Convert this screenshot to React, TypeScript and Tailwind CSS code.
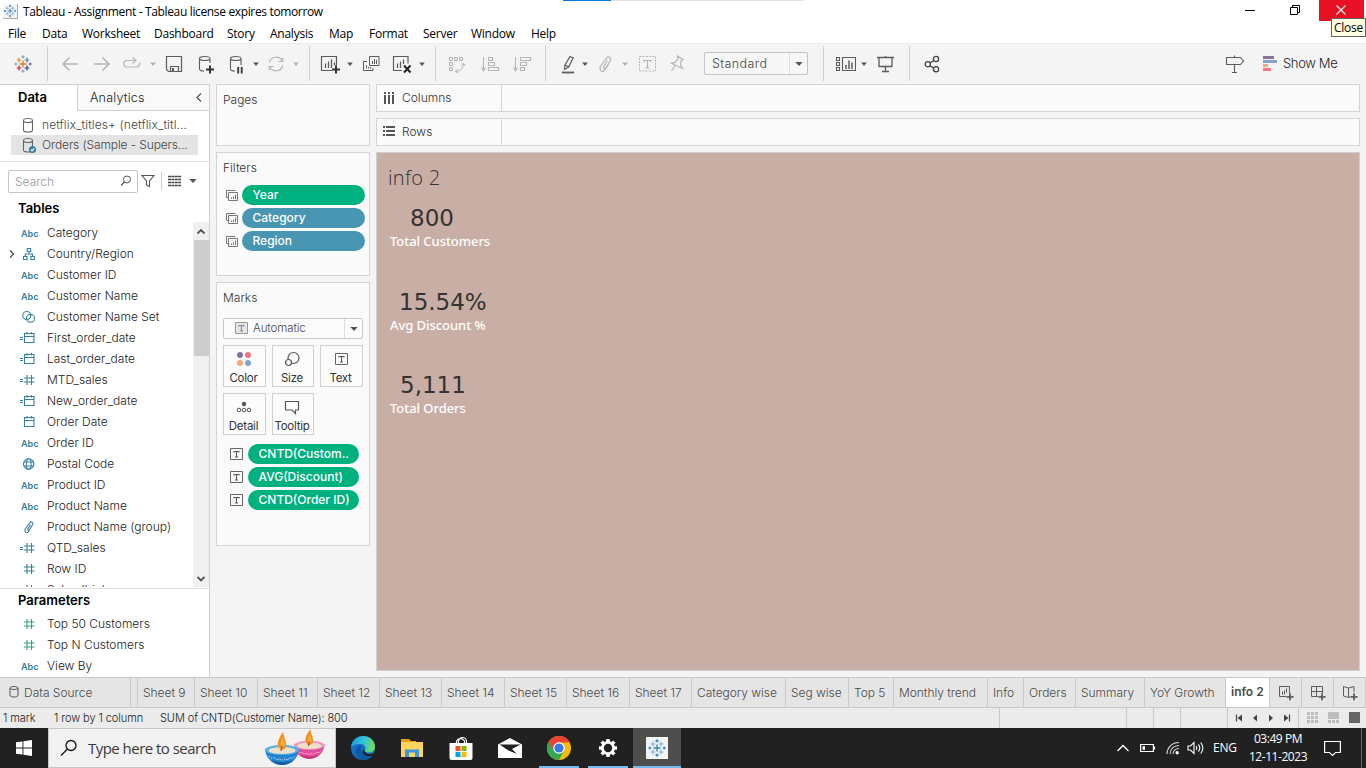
import React from "react";

type Kids = { children?: React.ReactNode; className?: string };

const UI = "font-['Open_Sans',sans-serif] font-normal";

function Svg({ w = 20, h = 20, className = "", children }: Kids & { w?: number; h?: number }) {
  return (
    <svg width={w} height={h} viewBox={`0 0 ${w} ${h}`} fill="none" className={`shrink-0 ${className}`}>
      {children}
    </svg>
  );
}

const plus = (x: number, y: number, r: number) => `M${x - r} ${y}h${2 * r}M${x} ${y - r}v${2 * r}`;

function TableauMark({ size, mono, className = "" }: { size: number; mono?: boolean; className?: string }) {
  const c = (a: string, b: string) => (mono ? b : a);
  return (
    <svg width={size} height={size} viewBox="0 0 20 20" fill="none" strokeWidth="1.2" className={`shrink-0 ${className}`}>
      <path d={plus(10, 10, 3.4)} stroke={c("#e8762c", "#2f7fae")} strokeWidth="1.3" />
      <path d={plus(6, 6, 2.4)} stroke={c("#eb912c", "#7fb4d3")} />
      <path d={plus(14, 6, 2.4)} stroke={c("#59879b", "#7fb4d3")} />
      <path d={plus(6, 14, 2.4)} stroke={c("#c72037", "#7fb4d3")} />
      <path d={plus(14, 14, 2.4)} stroke={c("#1f447e", "#7fb4d3")} />
      <path d={plus(10, 2.8, 1.6)} stroke={c("#7ba7bd", "#2f7fae")} />
      <path d={plus(10, 17.2, 1.6)} stroke={c("#9b9bc4", "#2f7fae")} />
      <path d={plus(2.8, 10, 1.6)} stroke={c("#7ba7bd", "#2f7fae")} />
      <path d={plus(17.2, 10, 1.6)} stroke={c("#5c6692", "#2f7fae")} />
    </svg>
  );
}

const Sep = ({ className = "" }: Kids) => <div className={`h-[35px] w-px shrink-0 bg-[#cfcfcf] ${className}`} />;

const Caret = ({ className = "", light }: Kids & { light?: boolean }) => (
  <Svg w={8} h={20} className={className}>
    <path d="M1.2 8.500h5.600L4 12z" fill={light ? "#b0b0b0" : "#555"} />
  </Svg>
);

const BigCaret = () => (
  <Svg w={8} h={6}>
    <path d="M.3 1h7.400L4 5z" fill="#555" />
  </Svg>
);

const G = "#5c5c5c";
const L = "#b5b5b5";

const menus: [string, string][] = [
  ["File", "w-[34px]"],
  ["Data", "w-[40px]"],
  ["Worksheet", "w-[72px]"],
  ["Dashboard", "w-[73px]"],
  ["Story", "w-[43px]"],
  ["Analysis", "w-[59px]"],
  ["Map", "w-[40px]"],
  ["Format", "w-[54px]"],
  ["Server", "w-[48px]"],
  ["Window", "w-[60px]"],
  ["Help", "w-[40px]"],
];

function TitleBar() {
  return (
    <div className={`relative flex h-6 shrink-0 ${UI} text-[12px] text-black`}>
      <div className="absolute left-[563px] top-0 flex h-px w-[241px] bg-[#e3e3e3]">
        <div className="w-12 bg-[#0078d7]" />
      </div>
      <div className="flex items-center pl-[3px]">
        <div className="mb-0.5 flex size-[15px] items-center justify-center border-b border-r border-[#aaa] bg-[#f6f6f6]">
          <TableauMark size={14} mono />
        </div>
        <span className="ml-[5px] tracking-[-0.35px]">Tableau - Assignment - Tableau license expires tomorrow</span>
      </div>
      <div className="ml-auto flex">
        <Svg w={45} h={21}>
          <path d="M16 10.500h10" stroke="#000" />
        </Svg>
        <Svg w={45} h={21}>
          <path d="M16.500 7.500h7v7h-7zM18.500 7V5.500h7v7H24" stroke="#000" />
        </Svg>
        <div className="h-[21px] w-[45px] bg-[#e81123]">
          <Svg w={45} h={21}>
            <path d="M17.500 5.500l9 9M26.500 5.500l-9 9" stroke="#fff" strokeWidth="1.100" />
          </Svg>
        </div>
        <div className="w-0.5" />
      </div>
      <div className="absolute right-0 top-[18px] z-10 flex h-[19px] w-[35px] items-center justify-center border border-[#646464] bg-[#ffffe1] text-[12px] tracking-[-0.3px]">
        Close
      </div>
    </div>
  );
}

function MenuBar() {
  return (
    <div className={`flex h-[19px] shrink-0 items-center pl-2 ${UI} text-[12px] tracking-[-0.25px] text-black`}>
      {menus.map(([m, w]) => (
        <div key={m} className={`${w} shrink-0`}>
          {m}
        </div>
      ))}
    </div>
  );
}

function Toolbar() {
  return (
    <div className="flex h-[41px] shrink-0 items-center border-t border-[#ececec] bg-[#f4f4f4] pb-px pl-[13px] pr-[29px]">
      <TableauMark size={20} />
      <Sep className="ml-[14px]" />
      <Svg className="ml-3">
        <path d="M3 10h15M9.500 3.500L3 10l6.500 6.500" stroke={L} strokeWidth="1.600" />
      </Svg>
      <Svg className="ml-3">
        <path d="M2 10h15M10.500 3.500L17 10l-6.500 6.500" stroke={L} strokeWidth="1.600" />
      </Svg>
      <Svg className="ml-[10px]">
        <path d="M13 6.500H5a3.200 3.200 0 000 6.500h9.500a3.200 3.200 0 003-4.500M10.500 3.500L14 6.500l-3.500 3" stroke={L} strokeWidth="1.200" />
      </Svg>
      <Caret light className="ml-[7px]" />
      <Svg className="ml-[7px]">
        <path d="M2.500 2.500h15v15h-13l-2-2zM6.500 17v-4.500h8V17" stroke={G} strokeWidth="1.200" />
        <path d="M8 14h2v3H8z" fill={G} />
      </Svg>
      <Svg className="ml-3">
        <path d="M14 9V4.500M3.500 4.500v10.500c0 1.200 2 2 4.500 2M3.500 4.500C3.500 3.200 5.800 2.500 8.700 2.500s5.300.7 5.300 2-2.400 2-5.300 2-5.200-.7-5.200-2z" stroke={G} strokeWidth="1.100" />
        <path d="M10 15.500h8M14 11.500v8" stroke="#333" strokeWidth="2" />
      </Svg>
      <Svg className="ml-[11px]">
        <path d="M14 11V4.500M3.500 4.500v10.500c0 1.200 2 2 4.500 2M3.500 4.500C3.500 3.200 5.800 2.500 8.700 2.500s5.300.7 5.300 2-2.400 2-5.300 2-5.200-.7-5.200-2z" stroke={G} strokeWidth="1.100" />
        <path d="M11.200 13v6.500M14.700 13v6.500" stroke="#333" strokeWidth="1.800" />
      </Svg>
      <Caret className="ml-[5px]" />
      <Svg className="ml-[6px]">
        <path d="M3.200 8.500a7 7 0 0113-1.500M16.800 11.500a7 7 0 01-13 1.500M12.500 7.500h4.200V3.500M7.500 12.500H3.300v4" stroke={L} strokeWidth="1.200" />
      </Svg>
      <Caret light className="ml-[6px]" />
      <Sep className="ml-[9px]" />
      <Svg className="ml-[10px]">
        <path d="M12 16.500H1.500v-14h15v9" stroke={G} strokeWidth="1.200" />
        <path d="M5.500 9.500V14M8.500 7.500V14M11.500 5.500V14M14.500 8.500v3" stroke={G} strokeWidth="1.300" />
        <path d="M12 15.500h8M16 11.500v8" stroke="#333" strokeWidth="2" />
      </Svg>
      <Caret className="ml-[6px]" />
      <Svg className="ml-[7px]">
        <path d="M8.500 2.500h9.500v9H8.500zM6 7.500H2.500v9H12V14" stroke={G} />
        <path d="M11.500 7v3M13.500 5v5M15.500 6v4M5.500 11v3.500M7.500 13v1.500M9.500 13v1.500" stroke={G} />
      </Svg>
      <Svg className="ml-[11px]">
        <path d="M10 16.500H1.500v-14h14.500v7" stroke={G} strokeWidth="1.200" />
        <path d="M5.500 9.500V14M8.500 7.500V14M11.500 5.500V10" stroke={G} strokeWidth="1.300" />
        <path d="M12 11.500l6.500 7M18.500 11.500l-6.500 7" stroke="#222" strokeWidth="2" />
      </Svg>
      <Caret className="ml-[6px]" />
      <Sep className="ml-[9px]" />
      <Svg className="ml-[11px]">
        <path d="M2.500 3.500h3v3h-3zM7.500 3.500h3v3h-3zM12.500 3.500h3v3h-3zM2.500 8.500h3v3h-3zM2.500 13.500h3v3h-3zM16.500 10c0 4-3 7-7.500 7.500M14 12l2.500-3 2 3M11 15l-3 2.500 3 1.500" stroke={L} />
      </Svg>
      <Svg className="ml-[13px]">
        <path d="M3.500 3v13M1.500 13.500L3.500 17l2-3.500M8.500 3.500h4v3h-4zM8.500 8.500h6v3h-6zM8.500 13.500h10v3h-10z" stroke={L} strokeWidth="1.100" />
      </Svg>
      <Svg className="ml-3">
        <path d="M3.500 3v13M1.500 13.500L3.500 17l2-3.500M8.500 3.500h10v3h-10zM8.500 8.500h6v3h-6zM8.500 13.500h4v3h-4z" stroke={L} strokeWidth="1.100" />
      </Svg>
      <Sep className="ml-[13px]" />
      <Svg className="ml-3">
        <path d="M12 2.500l3.200 1.300-4.700 9.500-4 2 .5-4.300zM7.200 11l3.300 1.800" stroke={G} strokeWidth="1.200" />
        <path d="M4 18.500h12" stroke={G} strokeWidth="1.800" />
      </Svg>
      <Caret className="ml-[3px]" />
      <Svg className="ml-[6px]">
        <path d="M12.500 6.500l-3.700 6.500c-.7 1.500 1.200 2.400 2 1L15.300 7c1.500-3.500-2-5.500-4-2.700L5.500 12.500c-1.800 4 1.800 6 4 3.800l4-6M5.500 12.500L11.300 4.300" stroke={L} strokeWidth="1.200" />
      </Svg>
      <Caret light className="ml-[6px]" />
      <Svg className="ml-2">
        <path d="M2.500 2.500h16v14.500h-16z" stroke={L} strokeDasharray="2 1.200" />
        <path d="M7 8V6.500h7V8M10.500 6.500v7.500M8.500 14h4" stroke={L} strokeWidth="1.200" />
      </Svg>
      <Svg className="ml-[10px]">
        <path d="M10.500 2l5.500 3.500-1.800.9-.7 4.600 2 3.200-3.500-1.200L4.500 9.200l3.300-.8 3-3.200zM8.300 11.500l-4 5.500" stroke={L} strokeWidth="1.200" />
      </Svg>
      <div className="ml-[17px] flex h-[23px] w-[104px] shrink-0 items-center rounded-[2px] border border-[#c4c4c4] bg-[#f7f7f7] pl-[7px] text-[12.5px] tracking-[0.4px] text-[#444]">
        <span className="pt-px">Standard</span>
        <div className="ml-auto flex h-full w-[18px] items-center justify-center border-l border-[#ddd]">
          <BigCaret />
        </div>
      </div>
      <Sep className="ml-[15px]" />
      <Svg className="ml-3">
        <path d="M.5 3.500h3v3h-3zM.5 8.500h3v3h-3zM.5 13.500h3v3h-3zM6.500 3.500h13v13h-13z" stroke={G} strokeWidth="1.100" />
        <path d="M10 11v4M13 6.500V15M16 8.500V15" stroke={G} strokeWidth="1.500" />
      </Svg>
      <Caret className="ml-1" />
      <Svg className="ml-2">
        <path d="M1 3.500h17M3 4v8.500h13V4M9.500 12.500v5M6 17.500h7M9.500 2v1" stroke={G} strokeWidth="1.300" />
      </Svg>
      <Sep className="ml-[13px]" />
      <Svg className="ml-3">
        <g stroke="#444" strokeWidth="1.300">
          <circle cx="5.800" cy="10.300" r="2.600" />
          <circle cx="14" cy="5" r="2.600" />
          <circle cx="14" cy="15.300" r="2.600" />
          <path d="M8 9l3.800-2.500M8 11.800l3.800 2.300" />
        </g>
      </Svg>
      <Svg className="ml-auto">
        <path d="M1.500 3.500h14L18.500 7l-3 3.500h-14zM9.500 1.500v2M9.500 10.500v7.500M7 18.500h5" stroke={G} strokeWidth="1.100" />
      </Svg>
      <Svg w={14} h={20} className="ml-[18px]">
        <path d="M0 3.500h11" stroke="#8a7399" strokeWidth="3" />
        <path d="M0 7.500h14" stroke="#84a4cb" strokeWidth="3" />
        <path d="M0 11.500h5" stroke="#f5a77e" strokeWidth="3" />
        <path d="M0 15.500h8" stroke="#f8737f" strokeWidth="3" />
      </Svg>
      <span className="ml-[6px] w-[54px] whitespace-nowrap text-[13px] tracking-[-0.35px] text-[#222]">Show Me</span>
    </div>
  );
}

type Kind = "abc" | "hier" | "set" | "date" | "cdate" | "num" | "cnum" | "geo" | "group";

function FieldIcon({ kind, green }: { kind: Kind; green?: boolean }) {
  const c = green ? "#35a27f" : "#37809f";
  if (kind === "abc")
    return <span className="w-4 pt-0.5 text-center text-[9px] font-semibold leading-none text-[#37809f]">Abc</span>;
  return (
    <svg width="20" height="16" viewBox="0 0 20 16" fill="none" stroke={c} strokeWidth="1.1" className="-ml-px shrink-0">
      {(kind === "cdate" || kind === "cnum") && <path d="M0 7.500h3M0 9.500h3" />}
      {(kind === "date" || kind === "cdate") && <path d="M4.500 3.500h9.500v9H4.500zM4.500 6.500H14M7 2v2.500M11.500 2v2.500" />}
      {(kind === "num" || kind === "cnum") && <path d="M7 3v10M11.500 3v10M4 6h10.500M4 10h10.500" />}
      {kind === "hier" && <path d="M7.200 2.500h3.500v3H7.200zM3.500 10.500h3.500v3H3.500zM10.800 10.500h3.500v3h-3.500zM9 5.500V8M5.300 10.500V8h7.300v2.500" />}
      {kind === "set" && (
        <>
          <circle cx="6.800" cy="6.500" r="4" />
          <circle cx="10.500" cy="9.300" r="4" />
        </>
      )}
      {kind === "geo" && (
        <>
          <circle cx="8.700" cy="8" r="5.200" />
          <ellipse cx="8.700" cy="8" rx="2.400" ry="5.200" />
          <path d="M4 6h9.400M4 10h9.400" />
        </>
      )}
      {kind === "group" && <path d="M10.500 5.500L7.800 10c-.5 1.300 1 2 1.600.8l3.200-5c1.300-2.400-1.500-4-3-1.800L5.200 10c-1.400 3 1.300 4.300 3 2.800l3.500-5.500" />}
    </svg>
  );
}

function Field({ kind, label, green, expand }: { kind: Kind; label: string; green?: boolean; expand?: boolean }) {
  return (
    <div className="flex h-[21px] shrink-0 items-center text-[12px] text-[#222]">
      <div className="w-[21px] pl-2">
        {expand && (
          <svg width="8" height="10" viewBox="0 0 8 10" fill="none">
            <path d="M2 1.500L5.500 5 2 8.500" stroke="#555" strokeWidth="1.400" />
          </svg>
        )}
      </div>
      <div className="flex w-[26px] items-center">
        <FieldIcon kind={kind} green={green} />
      </div>
      <span className="whitespace-nowrap">{label}</span>
    </div>
  );
}

const fields: [Kind, string][] = [
  ["abc", "Category"],
  ["hier", "Country/Region"],
  ["abc", "Customer ID"],
  ["abc", "Customer Name"],
  ["set", "Customer Name Set"],
  ["cdate", "First_order_date"],
  ["cdate", "Last_order_date"],
  ["cnum", "MTD_sales"],
  ["cdate", "New_order_date"],
  ["date", "Order Date"],
  ["abc", "Order ID"],
  ["geo", "Postal Code"],
  ["abc", "Product ID"],
  ["abc", "Product Name"],
  ["group", "Product Name (group)"],
  ["cnum", "QTD_sales"],
  ["num", "Row ID"],
  ["num", "Sales (bin)"],
];

const Cylinder = ({ check }: { check?: boolean }) => (
  <Svg w={16} h={18}>
    <path d="M1.500 4.500v9.500c0 1.200 2 2 4.500 2s4.500-.8 4.500-2V4.500M1.500 4.500c0-1.200 2-2 4.500-2s4.500.8 4.500 2-2 2-4.500 2-4.500-.8-4.500-2z" stroke="#666" strokeWidth="1.100" />
    {check && (
      <>
        <circle cx="10.500" cy="13.500" r="3.600" fill="#37809f" />
        <path d="M8.700 13.500l1.300 1.400 2.300-2.600" stroke="#fff" strokeWidth="1.100" />
      </>
    )}
  </Svg>
);

function DataPane() {
  return (
    <div className="flex w-[210px] shrink-0 flex-col border-r border-[#d0d0d0] bg-white">
      <div className="flex h-[27px] shrink-0 border-t border-[#d0d0d0]">
        <div className="flex w-[77px] items-center pl-[18px] text-[13px] font-semibold text-black">Data</div>
        <div className="flex flex-1 items-center border-b border-l border-[#d0d0d0] bg-[#f9f9f9] pl-3 text-[12.5px] tracking-[0.2px] text-[#222]">
          <span className="pt-px">Analytics</span>
          <Svg w={8} h={14} className="ml-auto mr-[6px]">
            <path d="M6 2.500L2 6.500l4 4" stroke="#555" strokeWidth="1.300" />
          </Svg>
        </div>
      </div>
      <div className="flex h-[50px] shrink-0 flex-col pl-[11px] pt-1 text-[12px] text-[#444]">
        <div className="flex h-5 w-[187px] items-center gap-[4px] pl-[11px]">
          <Cylinder />
          <span className="whitespace-nowrap tracking-[0.1px]">netflix_titles+ (netflix_titl...</span>
        </div>
        <div className="flex h-5 w-[187px] items-center gap-[4px] bg-[#e4e4e4] pl-[11px]">
          <Cylinder check />
          <span className="whitespace-nowrap tracking-[-0.12px]">Orders (Sample - Supers...</span>
        </div>
      </div>
      <div className="flex h-[39px] shrink-0 items-center border-t border-[#e0e0e0] pl-2">
        <div className="flex h-[23px] w-[130px] items-center rounded-[2px] border border-[#c4c4c4] pl-[6px] text-[12px] text-[#999]">
          <span className="pt-px">Search</span>
          <Svg w={12} h={12} className="ml-auto mr-[5px]">
            <circle cx="7" cy="4.500" r="3.500" stroke="#555" />
            <path d="M4.500 7L1 10.500" stroke="#555" strokeWidth="1.200" />
          </Svg>
        </div>
        <Svg w={14} h={16} className="ml-[3px]">
          <path d="M1 2.500h12L8.500 8v5.500L5.500 12V8z" stroke="#555" strokeWidth="1.100" />
        </Svg>
        <div className="ml-[6px] h-[18px] w-px bg-[#d0d0d0]" />
        <Svg w={13} h={14} className="ml-[6px]">
          <path d="M0 2.500h13M0 5.500h13M0 8.500h13M0 11.500h13" stroke="#444" strokeWidth="1.300" strokeDasharray="3 .4" />
        </Svg>
        <Svg w={8} h={6} className="ml-[8px]">
          <path d="M.3 1h7.400L4 5z" fill="#555" />
        </Svg>
      </div>
      <div className="flex h-[21px] shrink-0 items-start pl-[18px] text-[13px] font-semibold leading-[17px] text-black">Tables</div>
      <div className="flex h-[366px] shrink-0">
        <div className="flex flex-1 flex-col overflow-hidden pt-px">
          {fields.map(([k, l]) => (
            <Field key={l} kind={k} label={l} expand={k === "hier"} />
          ))}
        </div>
        <div className="mt-px flex w-4 shrink-0 flex-col items-center bg-[#f0f0f0]">
          <Svg w={16} h={18}>
            <path d="M4.500 11.500L8 8l3.500 3.500" stroke="#555" strokeWidth="1.800" />
          </Svg>
          <div className="h-[116px] w-[15px] bg-[#cdcdcd]" />
          <Svg w={16} h={17} className="mt-auto">
            <path d="M4.500 7L8 10.500 11.500 7" stroke="#555" strokeWidth="1.800" />
          </Svg>
        </div>
      </div>
      <div className="mt-px flex flex-1 flex-col border-t border-[#e0e0e0]">
        <div className="flex h-6 shrink-0 items-center pl-[18px] text-[13px] font-semibold text-black">Parameters</div>
        <Field kind="num" label="Top 50 Customers" green />
        <Field kind="num" label="Top N Customers" green />
        <Field kind="abc" label="View By" />
      </div>
    </div>
  );
}

const Card = ({ className = "", children }: Kids) => <div className={`shrink-0 border border-[#d4d4d4] bg-[#fafafa] ${className}`}>{children}</div>;

const TextGlyph = ({ className = "", light }: Kids & { light?: boolean }) => (
  <Svg w={14} h={14} className={className}>
    <path d="M1.500 1.500h12v11h-12z" stroke={light ? "#999" : "#666"} fill={light ? "#e6e6e6" : "none"} />
    <path d="M5 5.500V4.500h5v1M7.500 4.500v5.500M6 10h3" stroke={light ? "#888" : "#555"} strokeWidth="1.100" />
  </Svg>
);

const Pill = ({ className = "", children }: Kids) => (
  <div className={`flex h-5 items-center whitespace-nowrap rounded-full pl-[10.5px] text-[12px] font-medium text-white ${className}`}>{children}</div>
);

function FilterRow({ label, bg }: { label: string; bg: string }) {
  return (
    <div className="flex items-center pl-[9px]">
      <Svg w={12} h={12}>
        <path d="M2.500 8.500h-2v-7h9M2.500 3.500h9v8h-9z" stroke="#777" />
        <path d="M5.500 8.500V10M7.500 7.500V10M9.500 5.500V10" stroke="#777" />
      </Svg>
      <Pill className={`ml-1 w-[123px] ${bg}`}>{label}</Pill>
    </div>
  );
}

const MarkButton = ({ label, children }: Kids & { label: string }) => (
  <div className="flex h-[42px] flex-col items-center border border-[#d0d0d0] bg-[#fcfcfc] pr-[2px] pt-[5px]">
    <div className="flex h-[16px] items-center">{children}</div>
    <span className="mt-[3px] text-[11.5px] font-normal leading-[16px] tracking-[-0.25px] text-[#333]">{label}</span>
  </div>
);

function Shelves() {
  return (
    <div className="flex w-[154px] shrink-0 flex-col gap-[6px] text-[12px] text-[#333]">
      <Card className="h-[62px] px-[6px] pt-[6px]">Pages</Card>
      <Card className="h-[124px] pt-[6px]">
        <div className="px-[6px]">Filters</div>
        <div className="mt-2 flex flex-col gap-[3px]">
          <FilterRow label="Year" bg="bg-[#00b180]" />
          <FilterRow label="Category" bg="bg-[#4996b2]" />
          <FilterRow label="Region" bg="bg-[#4996b2]" />
        </div>
      </Card>
      <Card className="h-[264px] px-[6px] pt-[6px]">
        <div>Marks</div>
        <div className="mt-[11px] flex h-[21px] w-[140px] items-center rounded-[2px] border border-[#c8c8c8] bg-[#fcfcfc] pl-[10px] text-[#444]">
          <TextGlyph light className="mb-px" />
          <span className="ml-[5px] pt-px text-[11.500px] tracking-[-0.1px]">Automatic</span>
          <div className="ml-auto flex h-full w-[18px] items-center justify-center border-l border-[#ddd]">
            <BigCaret />
          </div>
        </div>
        <div className="mt-[6px] grid grid-cols-[43px_42px_43px] gap-[6px]">
          <MarkButton label="Color">
            <Svg w={16} h={16}>
              <circle cx="4" cy="4" r="3" fill="#86719a" />
              <circle cx="12" cy="4" r="3" fill="#f8737f" />
              <circle cx="4" cy="12" r="3" fill="#f5a77e" />
              <circle cx="12" cy="12" r="3" fill="#84a4cb" />
            </Svg>
          </MarkButton>
          <MarkButton label="Size">
            <Svg w={16} h={16}>
              <circle cx="9.500" cy="7" r="5.500" stroke="#555" strokeWidth="1.200" />
              <circle cx="4.500" cy="11.500" r="3" stroke="#555" strokeWidth="1.200" fill="#fcfcfc" />
            </Svg>
          </MarkButton>
          <MarkButton label="Text">
            <TextGlyph />
          </MarkButton>
          <MarkButton label="Detail">
            <Svg w={16} h={16}>
              <circle cx="8" cy="5" r="2.200" fill="#555" />
              <circle cx="3" cy="11" r="1.800" stroke="#555" />
              <circle cx="8" cy="11" r="1.800" stroke="#555" />
              <circle cx="13" cy="11" r="1.800" stroke="#555" />
            </Svg>
          </MarkButton>
          <MarkButton label="Tooltip">
            <Svg w={16} h={16}>
              <path d="M1.500 2.500h13v8.500h-3v3.500L8 11H1.500z" stroke="#555" strokeWidth="1.200" />
            </Svg>
          </MarkButton>
        </div>
        <div className="mt-[9px] flex flex-col gap-[3px]">
          {["CNTD(Custom..", "AVG(Discount)", "CNTD(Order ID)"].map((t) => (
            <div key={t} className="flex items-center pl-[6px]">
              <TextGlyph />
              <Pill className="ml-[5px] w-[111px] bg-[#00b180]">{t}</Pill>
            </div>
          ))}
        </div>
      </Card>
    </div>
  );
}

function ShelfBar({ label, children }: Kids & { label: string }) {
  return (
    <Card className="flex h-7 text-[12px] text-[#333]">
      <div className="flex w-[125px] items-center border-r border-[#d4d4d4] pl-[6px]">
        {children}
        <span className="ml-[7px]">{label}</span>
      </div>
    </Card>
  );
}

function Kpi({ value, label, pad, className = "" }: { value: string; label: string; pad: string; className?: string }) {
  return (
    <div className={`pl-[13px] ${className}`}>
      <div className={`h-[28px] font-['DejaVu_Sans',sans-serif] text-[23px] font-normal leading-[29px] text-[#333] ${pad}`}>{value}</div>
      <div className="font-['Noto_Sans',sans-serif] text-[13px] font-medium leading-[18px] tracking-[-0.05px] text-white">{label}</div>
    </div>
  );
}

function Worksheet() {
  return (
    <div className="flex w-[984px] shrink-0 flex-col gap-[6px]">
      <ShelfBar label="Columns">
        <Svg w={12} h={14}>
          <path d="M2 1v2M6 1v2M10 1v2M2 4v9M6 4v9M10 4v9" stroke="#555" strokeWidth="2" />
        </Svg>
      </ShelfBar>
      <ShelfBar label="Rows">
        <Svg w={12} h={14}>
          <path d="M0 2h2M0 6h2M0 10h2M3 2h9M3 6h9M3 10h9" stroke="#555" strokeWidth="2" />
        </Svg>
      </ShelfBar>
      <div className="h-[519px] border border-[#d0d0d0] bg-[#c9aea5]">
        <div className="pl-[11px] pt-[10px] font-['Open_Sans',sans-serif] text-[20px] font-light leading-[30px] tracking-[0.3px] text-[#333]">info 2</div>
        <Kpi value="800" label="Total Customers" pad="pl-[20px]" className="mt-[11px]" />
        <Kpi value="15.54%" label="Avg Discount %" pad="pl-[9px]" className="mt-[38px]" />
        <Kpi value="5,111" label="Total Orders" pad="pl-[10px]" className="mt-[37px]" />
      </div>
    </div>
  );
}

const tabs: [string, string][] = [
  ["Sheet 9", "w-[57px]"],
  ["Sheet 10", "w-[63px]"],
  ["Sheet 11", "w-[60px]"],
  ["Sheet 12", "w-[62px]"],
  ["Sheet 13", "w-[62px]"],
  ["Sheet 14", "w-[63px]"],
  ["Sheet 15", "w-[62px]"],
  ["Sheet 16", "w-[63px]"],
  ["Sheet 17", "w-[62px]"],
  ["Category wise", "w-[94px]"],
  ["Seg wise", "w-[63px]"],
  ["Top 5", "w-[45px]"],
  ["Monthly trend", "w-[94px]"],
  ["Info", "w-[36px]"],
  ["Orders", "w-[52px]"],
  ["Summary", "w-[69px]"],
  ["YoY Growth", "w-[81px]"],
];

function SheetTabs() {
  return (
    <div className="flex h-[31px] shrink-0 border-y border-[#c9c9c9] bg-[#e5e5e5] text-[12px] text-[#4a4a4a]">
      <div className="flex w-[131px] items-center border-r border-[#c9c9c9] pl-[9px]">
        <Svg w={10} h={13} className="mb-[3px]">
          <path d="M1 3v7.500c0 .8 1.700 1.500 4 1.500s4-.7 4-1.500V3M1 3c0-.8 1.700-1.500 4-1.500S9 2.200 9 3s-1.700 1.500-4 1.500S1 3.800 1 3z" stroke="#555" />
        </Svg>
        <span className="ml-[5px]">Data Source</span>
      </div>
      <div className="w-[7px] border-r border-[#c9c9c9]" />
      {tabs.map(([t, w]) => (
        <div key={t} className={`flex shrink-0 items-center whitespace-nowrap border-r border-[#c9c9c9] pl-[5px] tracking-[-0.04px] ${w}`}>
          {t}
        </div>
      ))}
      <div className="flex w-11 shrink-0 items-center border-r border-[#c9c9c9] bg-white pb-[2px] pl-[5px] text-[12px] font-semibold text-[#4a4a4a]">info 2</div>
      <div className="flex w-8 shrink-0 items-center justify-center border-r border-[#c9c9c9]">
        <Svg w={16} h={16}>
          <path d="M8 11.500H1.500v-10h10V8M4.500 6.500v3M6.500 5.500v4M8.500 3.500v4" stroke={G} />
          <path d="M8.500 11.800h7M12 8.300v7" stroke={G} strokeWidth="1.800" />
        </Svg>
      </div>
      <div className="flex w-8 shrink-0 items-center justify-center border-r border-[#c9c9c9]">
        <Svg w={16} h={16}>
          <path d="M8 11.500H1.500v-10h11V8M1.500 6.500h11M6.500 1.500v10" stroke={G} />
          <path d="M8.500 11.800h7M12 8.300v7" stroke={G} strokeWidth="1.800" />
        </Svg>
      </div>
      <div className="flex w-8 shrink-0 items-center justify-center border-r border-[#c9c9c9]">
        <Svg w={16} h={16}>
          <path d="M6.500 3v9.500L1.500 11V1.500zM6.500 3l5.500-1.500V7M6.500 12.500l2-.7" stroke={G} />
          <path d="M8.500 11.800h7M12 8.300v7" stroke={G} strokeWidth="1.800" />
        </Svg>
      </div>
    </div>
  );
}

function StatusBar() {
  return (
    <div className="flex h-5 shrink-0 items-center bg-[#ebebeb] pl-[3px] text-[11px] tracking-[-0.08px] text-[#222]">
      <span className="w-[51px]">1 mark</span>
      <span className="w-[106px] whitespace-nowrap">1 row by 1 column</span>
      <span className="whitespace-nowrap">SUM of CNTD(Customer Name): 800</span>
      <div className="ml-auto flex h-full border-l border-[#c9c9c9]">
        <div className="w-[127px] border-r border-[#c9c9c9]" />
        <div className="w-[27px] border-r border-[#c9c9c9]" />
        <div className="w-[27px] border-r border-[#c9c9c9]" />
        <div className="w-[47px] border-r border-[#c9c9c9]" />
        <div className="flex w-[71px] items-center gap-[8px] border-r border-[#c9c9c9] pl-[7px]">
          <Svg w={8} h={8}>
            <path d="M1.500.5v7" stroke="#444" strokeWidth="1.200" />
            <path d="M7 .5v7L2.500 4z" fill="#444" />
          </Svg>
          <Svg w={8} h={8}>
            <path d="M6 .5v7L2 4z" fill="#444" />
          </Svg>
          <Svg w={8} h={8}>
            <path d="M2 .5v7L6 4z" fill="#444" />
          </Svg>
          <Svg w={8} h={8}>
            <path d="M6.500.5v7" stroke="#444" strokeWidth="1.200" />
            <path d="M1 .5v7L5.500 4z" fill="#444" />
          </Svg>
        </div>
        <div className="flex w-[67px] items-center gap-[10px] pb-px pl-2">
          <Svg w={11} h={11}>
            <path d="M0 1.500h11M0 5.500h11M0 9.500h11" stroke="#bdbdbd" strokeWidth="3" strokeDasharray="3 1" />
          </Svg>
          <Svg w={11} h={11}>
            <path d="M0 0h11v7H0z" fill="#bdbdbd" />
            <path d="M0 9.500h11" stroke="#bdbdbd" strokeWidth="3" strokeDasharray="3 1" />
          </Svg>
          <div className="size-[11px] bg-[#666]" />
        </div>
      </div>
    </div>
  );
}

const Bowl = ({ x, y, s, dark, mid, light }: { x: number; y: number; s: number; dark: string; mid: string; light: string }) => (
  <g transform={`translate(${x} ${y}) scale(${s})`}>
    <path d="M0 16c1 9 7 16 17 16s16-7 17-16z" fill={mid} />
    <path d="M6 27c3 3 7 5 11 5s8-2 11-5c-6 3-16 3-22 0z" fill={dark} />
    <ellipse cx="17" cy="17" rx="17" ry="5" fill={light} />
    <ellipse cx="17" cy="17.500" rx="13.500" ry="3.600" fill="#eddfc8" />
    <path d="M4 23q3 4 5 1.500 3 3.500 5 1 3 3 6 0 2.500 2.500 5-1 3 2 5-1.500" stroke="#fff" strokeOpacity=".8" strokeDasharray="1.500 1" fill="none" />
    <path d="M18-1C14 5 11 10 14 15c2 3 6 2 7-1 1.500-5-2-8-3-15z" fill="#f5911e" />
    <path d="M18 5c-2 3-3.500 6-1.500 8.500 1.500 1 3 0 3-2 .2-2-1-3.500-1.500-6.500z" fill="#fbb03b" />
    <path d="M17 13l-1 5" stroke="#a55a2a" strokeWidth="1.200" />
  </g>
);

const Slot = ({ children, className = "" }: Kids) => <div className={`flex h-full shrink-0 flex-col items-center justify-center ${className}`}>{children}</div>;

const gearTeeth = [0, 45, 90, 135, 180, 225, 270, 315];

function Taskbar() {
  return (
    <div className={`flex h-10 shrink-0 bg-[#212121] ${UI} text-white`}>
      <div className="flex w-12 shrink-0 items-center justify-center">
        <Svg w={16} h={16}>
          <path d="M0 2.300l6.500-.9v6.200H0zM7.400 1.200L16 0v7.600H7.400zM0 8.400h6.500v6.200L0 13.700zM7.400 8.400H16V16l-8.600-1.200z" fill="#fff" />
        </Svg>
      </div>
      <div className="flex w-[288px] shrink-0 items-center border border-[#c6c6c6] bg-[#f2f2f2] pl-[11px]">
        <Svg w={17} h={18}>
          <circle cx="11" cy="6.500" r="5" stroke="#111" strokeWidth="1.300" />
          <path d="M7.300 10.200L1 16.500" stroke="#111" strokeWidth="1.300" />
        </Svg>
        <span className="ml-[11px] whitespace-nowrap text-[15px] tracking-[-0.53px] text-[#3a3a3a]">Type here to search</span>
        <Svg w={64} h={38} className="ml-auto mr-[7px]">
          <Bowl x={30} y={1} s={0.9} dark="#c9317c" mid="#e0509a" light="#f595c3" />
          <Bowl x={1} y={4} s={1} dark="#145b9e" mid="#2383cf" light="#4fb0ea" />
        </Svg>
      </div>
      <Slot className="ml-[2px] w-[49px]">
        <svg width="26" height="26" viewBox="0 0 26 26">
          <defs>
            <linearGradient id="wave" x1="0" y1="0.300" x2="1" y2="0.500">
              <stop offset="0" stopColor="#1b9de2" />
              <stop offset="0.500" stopColor="#35c1e0" />
              <stop offset="1" stopColor="#6fdf52" />
            </linearGradient>
          </defs>
          <circle cx="13" cy="13" r="12" fill="#1470c8" />
          <path d="M1 12C2 5 7 1 13 1c7 0 12 5 12 10.500 0 4-3 6-6.500 6-3 0-4-1.200-3.500-2 1.500-2 .5-6-4-6.500C6 8.500 2 10 1 12z" fill="url(#wave)" />
          <path d="M14.500 16c0 1.500 2 3 5 3 2.500 0 4-.6 5.500-1.500L27 19l-2.500 2.500c-3 .8-6.500.7-9-.8-3-1.800-3.500-4.200-2.500-6.500z" fill="#212121" />
          <path d="M8 11c-4 3-4 10 3.500 13.800C17 25.800 21 23 22.500 20.500c-3 1-6.500.6-8.500-.7C11 18 9.500 13.500 12 10.500 10.500 10 9 10.300 8 11z" fill="#0c59a4" />
        </svg>
      </Slot>
      <Slot className="w-[49px]">
        <Svg w={22} h={20}>
          <path d="M0 1h8l2 2h5v5H0z" fill="#e3a20b" />
          <path d="M0 4h22v15H0z" fill="#fcd462" />
          <path d="M4 11.500h14V19h-4v-4.500H8V19H4z" fill="#3a96dd" />
        </Svg>
      </Slot>
      <Slot className="w-[49px]">
        <Svg w={24} h={25}>
          <path d="M7.500 8V5a4.500 4.500 0 018 0v3M9.500 8V5.500a4 4 0 018 0V8" stroke="#fff" strokeWidth="1.200" />
          <path d="M.5 7h23v15a2 2 0 01-2 2h-19a2 2 0 01-2-2z" fill="#fff" />
          <path d="M6.500 10h5v5h-5z" fill="#f25022" />
          <path d="M12.500 10h5v5h-5z" fill="#7fba00" />
          <path d="M6.500 16h5v5h-5z" fill="#00a4ef" />
          <path d="M12.500 16h5v5h-5z" fill="#ffb900" />
        </Svg>
      </Slot>
      <Slot className="w-[49px]">
        <Svg w={24} h={20}>
          <path d="M0 6.500L12 0l12 6.500V20H0z" fill="#fff" />
          <path d="M1.500 6.500h21L14 11l5 5-8.500-3.500z" fill="#212121" />
        </Svg>
      </Slot>
      <Slot className="relative w-[49px]">
        <svg width="24" height="24" viewBox="0 0 24 24">
          <circle cx="12" cy="12" r="12" fill="#fbbc05" />
          <path d="M12 12L1.600 6A12 12 0 0012 24l5-9z" fill="#34a853" />
          <path d="M12 6.500h10.700A12 12 0 001.600 6L7 15z" fill="#ea4335" />
          <circle cx="12" cy="12" r="5.800" fill="#fff" />
          <circle cx="12" cy="12" r="4.600" fill="#3b78e7" />
        </svg>
        <div className="absolute bottom-0 h-0.5 w-10 bg-[#76b9ed]" />
      </Slot>
      <Slot className="relative w-[50px]">
        <Svg w={20} h={20}>
          <circle cx="10" cy="10" r="5.600" stroke="#fff" strokeWidth="2.800" />
          {gearTeeth.map((a) => (
            <path key={a} d="M8.300 1h3.400v3H8.300z" fill="#fff" transform={`rotate(${a} 10 10)`} />
          ))}
        </Svg>
        <div className="absolute bottom-0 h-0.5 w-10 bg-[#76b9ed]" />
      </Slot>
      <Slot className="relative w-12 bg-[#4e4e4e]">
        <div className="mr-px flex size-[22px] items-center justify-center bg-[#f4f4f4]">
          <TableauMark size={20} mono />
        </div>
        <div className="absolute bottom-0 h-0.5 w-12 bg-[#76b9ed]" />
      </Slot>
      <div className="ml-auto flex items-center">
        <Svg w={14} h={10}>
          <path d="M1.500 8L7 2.500 12.500 8" stroke="#fff" strokeWidth="1.300" />
        </Svg>
        <Svg w={16} h={12} className="ml-[10px]">
          <path d="M.6 2.500h12.800v7H.6zM14.500 4.500v3" stroke="#fff" strokeWidth="1.200" />
          <path d="M2.500 4.200H5v3.600H2.500z" fill="#fff" />
        </Svg>
        <Svg w={14} h={14} className="ml-[10px]">
          <path d="M1 13C1 6.500 6 1.500 13 1.500M4 13c0-5 4-8.500 9-8.500M7 13c0-3 2.500-5.500 6-5.500" stroke="#ddd" strokeWidth="1.100" />
          <circle cx="11.200" cy="11.800" r="1.700" fill="#fff" />
        </Svg>
        <Svg w={17} h={14} className="ml-[7px]">
          <path d="M1 5h2.500L7 1.500v11L3.500 9H1zM9 5q1.500 2 0 4M11.300 3.300q3 3.700 0 7.400M13.700 1.500q4.300 5.500 0 11" stroke="#fff" strokeWidth="1.100" />
        </Svg>
        <span className="ml-[9px] w-[36px] text-[12px] tracking-[-0.2px]">ENG</span>
        <div className="flex w-[58px] flex-col items-center whitespace-nowrap text-[12px] leading-[18px] tracking-[-0.45px]">
          <span>03:49 PM</span>
          <span>12-11-2023</span>
        </div>
        <Svg w={17} h={18} className="ml-[17px]">
          <path d="M.6 2.500h15.800v11h-4.900l-3 3-3-3H.6z" stroke="#fff" strokeWidth="1.200" />
        </Svg>
        <div className="ml-5 mr-1 h-10 w-px bg-[#666]" />
      </div>
    </div>
  );
}

export default function App() {
  return (
    <div className="flex h-[768px] w-[1366px] flex-col overflow-hidden bg-white font-['Inter',sans-serif] font-light">
      <TitleBar />
      <MenuBar />
      <Toolbar />
      <div className="flex h-[593px] shrink-0 gap-[6px] bg-[#f4f4f4]">
        <DataPane />
        <Shelves />
        <Worksheet />
      </div>
      <SheetTabs />
      <StatusBar />
      <Taskbar />
    </div>
  );
}
